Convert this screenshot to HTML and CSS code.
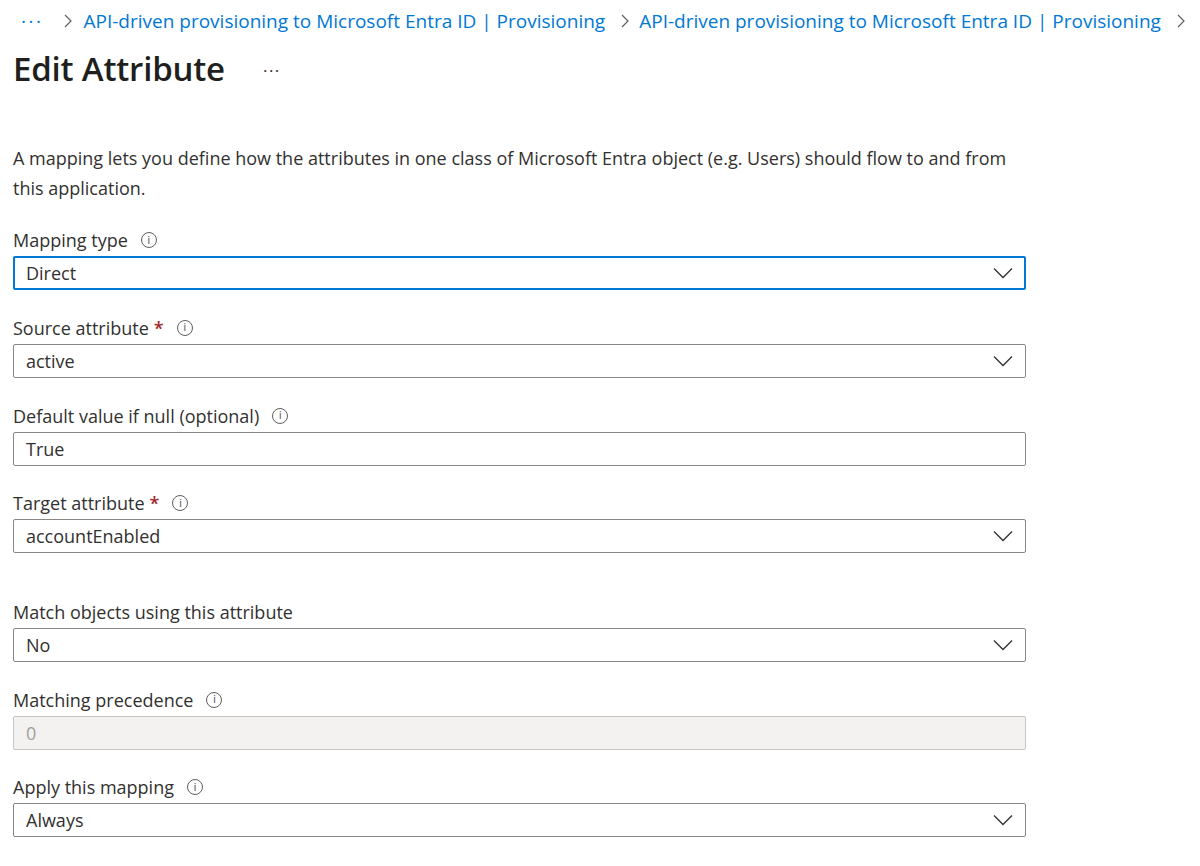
FILE: index.html
```html
<!DOCTYPE html>
<html>
<head>
<meta charset="utf-8">
<link rel="stylesheet" href="styles.css">
</head>
<body>
<div class="page">
  <nav class="crumbs">
    <span class="crumb-more">···</span>
    <span class="sep first"><svg width="10" height="16" viewBox="0 0 10 16"><path d="M2 2l6 6-6 6" fill="none" stroke="#605e5c" stroke-width="1.2"/></svg></span>
    <a class="crumb">API-driven provisioning to Microsoft Entra ID | Provisioning</a>
    <span class="sep"><svg width="10" height="16" viewBox="0 0 10 16"><path d="M2 2l6 6-6 6" fill="none" stroke="#605e5c" stroke-width="1.2"/></svg></span>
    <a class="crumb">API-driven provisioning to Microsoft Entra ID | Provisioning</a>
    <span class="sep"><svg width="10" height="16" viewBox="0 0 10 16"><path d="M2 2l6 6-6 6" fill="none" stroke="#605e5c" stroke-width="1.2"/></svg></span>
  </nav>
  <header class="title-row">
    <h1 class="title">Edit Attribute</h1>
    <span class="title-more">···</span>
  </header>

  <form class="form">
    <p class="desc">A mapping lets you define how the attributes in one class of Microsoft Entra object (e.g. Users) should flow to and from this application.</p>

    <div class="field">
      <div class="label">Mapping type <span class="info">i</span></div>
      <div class="box select focused"><span>Direct</span><svg class="chev" width="20" height="12" viewBox="0 0 20 12"><path d="M1 1.5l9 9 9-9" fill="none" stroke="#323130" stroke-width="1.3"/></svg></div>
    </div>

    <div class="field">
      <div class="label">Source attribute <span class="req">*</span> <span class="info">i</span></div>
      <div class="box select"><span>active</span><svg class="chev" width="20" height="12" viewBox="0 0 20 12"><path d="M1 1.5l9 9 9-9" fill="none" stroke="#323130" stroke-width="1.3"/></svg></div>
    </div>

    <div class="field">
      <div class="label">Default value if null (optional) <span class="info">i</span></div>
      <div class="box"><span>True</span></div>
    </div>

    <div class="field spaced">
      <div class="label">Target attribute <span class="req">*</span> <span class="info">i</span></div>
      <div class="box select"><span>accountEnabled</span><svg class="chev" width="20" height="12" viewBox="0 0 20 12"><path d="M1 1.5l9 9 9-9" fill="none" stroke="#323130" stroke-width="1.3"/></svg></div>
    </div>

    <div class="field">
      <div class="label">Match objects using this attribute</div>
      <div class="box select"><span>No</span><svg class="chev" width="20" height="12" viewBox="0 0 20 12"><path d="M1 1.5l9 9 9-9" fill="none" stroke="#323130" stroke-width="1.3"/></svg></div>
    </div>

    <div class="field">
      <div class="label">Matching precedence <span class="info">i</span></div>
      <div class="box disabled"><span>0</span></div>
    </div>

    <div class="field">
      <div class="label">Apply this mapping <span class="info">i</span></div>
      <div class="box select"><span>Always</span><svg class="chev" width="20" height="12" viewBox="0 0 20 12"><path d="M1 1.5l9 9 9-9" fill="none" stroke="#323130" stroke-width="1.3"/></svg></div>
    </div>
  </form>
</div>
</body>
</html>
```

FILE: styles.css
```css
* { box-sizing: border-box; }
html, body { margin: 0; padding: 0; background: #ffffff; }
body {
  font-family: "Segoe UI", "Open Sans", "Noto Sans", sans-serif;
  color: #323130;
  font-size: 18px;
}
.page { padding: 0 0 0 13px; }

.crumbs {
  display: flex;
  align-items: center;
  height: 42px;
  white-space: nowrap;
  font-size: 19px;
  color: #0078d4;
}
.crumb-more { margin-left: 8px; letter-spacing: 2.5px; color: #0078d4; }
.sep { display: inline-flex; margin: 0 9px 0 15px; }
.sep.first { margin-left: 20px; margin-right: 10px; }
.crumb { color: #0078d4; text-decoration: none; }

.title-row {
  display: flex;
  align-items: center;
  height: 52px;
}
.title {
  margin: 0;
  font-size: 33px;
  font-weight: 600;
  color: #201f1e;
  letter-spacing: -0.2px;
}
.title-more { margin-left: 38px; font-size: 17px; color: #323130; letter-spacing: 1.5px; margin-top: 4px; }

.form { width: 1013px; padding-top: 49px; }
.desc {
  margin: 0 0 25px 0;
  line-height: 30px;
  font-size: 18px;
}

.field { margin-bottom: 25.8px; }
.field.spaced { margin-bottom: 46.5px; }
.label {
  height: 24px;
  line-height: 24px;
  margin-bottom: 4px;
  display: flex;
  align-items: center;
}
.req { color: #a4262c; margin-left: 5px; font-weight: 600; }
.info {
  display: inline-flex;
  align-items: center;
  justify-content: center;
  width: 16px;
  height: 16px;
  border: 1px solid #605e5c;
  border-radius: 50%;
  font-size: 11px;
  line-height: 1;
  color: #605e5c;
  margin-left: 13px;
  font-family: "DejaVu Sans", sans-serif;
}
.box {
  height: 34px;
  border: 1px solid #8a8886;
  border-radius: 2px;
  display: flex;
  align-items: center;
  justify-content: space-between;
  padding: 0 12px 0 12px;
  font-size: 18px;
  color: #323130;
}
.box.focused { border: 2px solid #0078d4; padding-left: 11px; padding-right: 11px; }
.box.disabled { background: #f3f2f1; border-color: #c8c6c4; color: #a19f9d; }
.chev { margin-right: 0; }
```
